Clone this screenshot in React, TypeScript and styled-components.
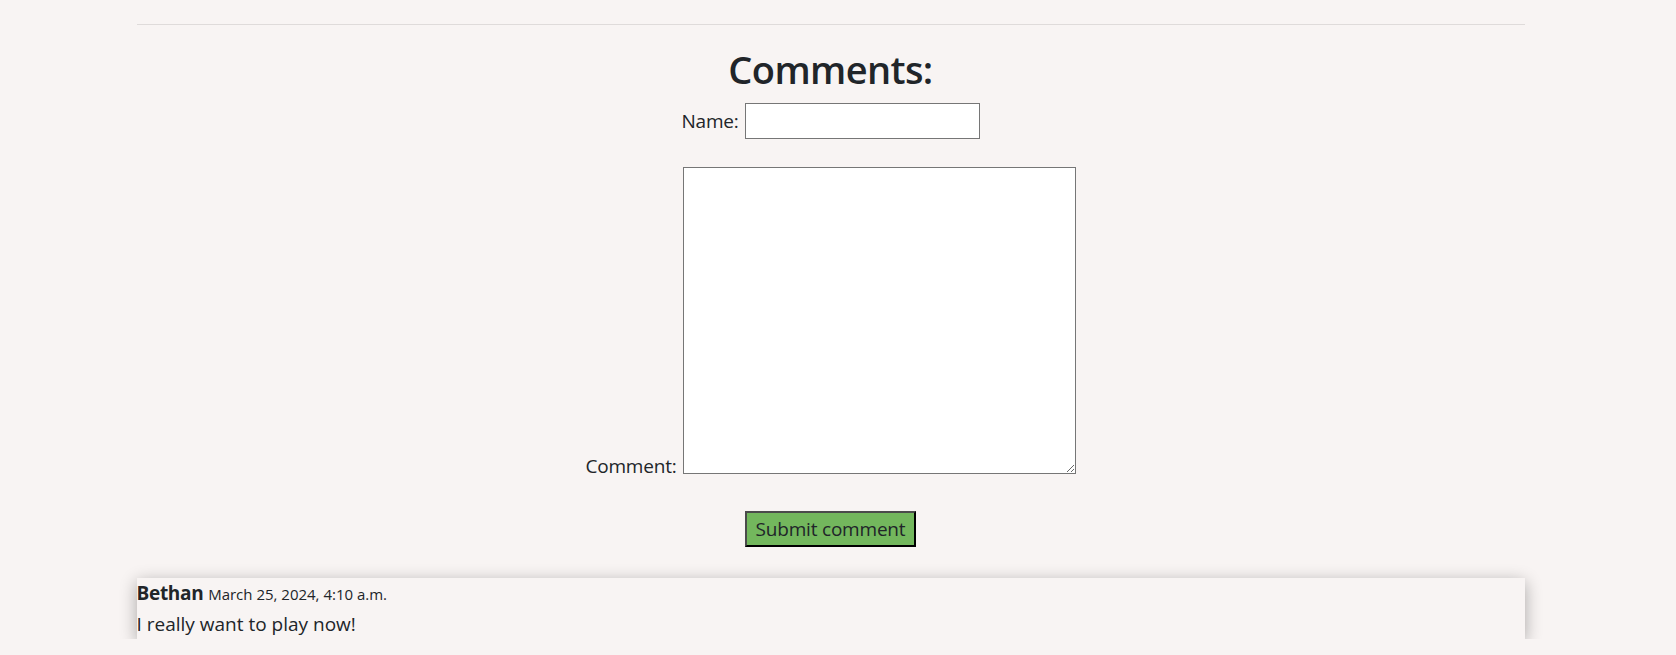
import React from "react";
import styled, { createGlobalStyle } from "styled-components";

const GlobalStyle = createGlobalStyle`
  html, body {
    margin: 0;
    padding: 0;
    background: #f8f4f3;
  }
  body {
    font-family: "Open Sans", "Noto Sans", sans-serif;
    font-size: 19px;
    letter-spacing: -0.2px;
    line-height: 1.5;
    color: #212529;
  }
  * { box-sizing: border-box; }
`;

const Page = styled.div`
  width: 1661px;
  padding-top: 24px;
`;

const Container = styled.main`
  width: 1388px;
  margin: 0 auto;
`;

const Rule = styled.hr`
  margin: 0;
  border: 0;
  border-top: 1px solid #dfdbda;
`;

const Section = styled.section`
  display: flex;
  flex-direction: column;
  align-items: center;
`;

const Title = styled.h1`
  margin: 20px 0 0;
  font-size: 38px;
  font-weight: 600;
  letter-spacing: -0.6px;
  line-height: 48px;
  text-align: center;
`;

const Form = styled.form`
  display: flex;
  flex-direction: column;
  align-items: center;
`;

const Row = styled.div<{ $end?: boolean; $top: number }>`
  display: flex;
  justify-content: center;
  align-items: ${(p) => (p.$end ? "flex-end" : "center")};
  gap: 6px;
  margin-top: ${(p) => p.$top}px;
`;

const Label = styled.label<{ $end?: boolean }>`
  line-height: 30px;
  margin-bottom: ${(p) => (p.$end ? "-7px" : "0")};
`;

const TextInput = styled.input`
  width: 235px;
  height: 36px;
  border: 1px solid #767676;
  background: #fff;
  font: inherit;
  padding: 1px 2px;
  margin: 0;
`;

const TextArea = styled.textarea`
  width: 393px;
  height: 307px;
  border: 1px solid #767676;
  background: #fff;
  margin: 0;
  padding: 2px;
`;

const SubmitButton = styled.button`
  margin-top: 37px;
  width: 171px;
  height: 36px;
  padding: 0;
  background: #73b75d;
  border-width: 2px;
  border-style: solid;
  border-color: #4b4b4b #000 #000 #4b4b4b;
  font-family: inherit;
  font-size: 19px;
  letter-spacing: -0.2px;
  line-height: 30px;
  color: #212529;
`;

const CommentCard = styled.article`
  margin-top: 31px;
  width: 100%;
  background: #f8f4f3;
  box-shadow: 0 4px 16px rgba(0, 0, 0, 0.32);
`;

const Meta = styled.div`
  line-height: 30px;
`;

const Author = styled.strong`
  font-weight: 700;
  font-size: 19px;
  letter-spacing: -0.3px;
`;

const Stamp = styled.span`
  font-size: 15px;
  letter-spacing: 0;
`;

const Body = styled.p`
  margin: 0;
  line-height: 30px;
  letter-spacing: 0;
`;

export default function App() {
  return (
    <>
      <GlobalStyle />
      <Page>
        <Container>
          <Rule />
          <Section>
            <Title>Comments:</Title>
            <Form onSubmit={(e) => e.preventDefault()}>
              <Row $top={10}>
                <Label htmlFor="name">Name:</Label>
                <TextInput id="name" type="text" />
              </Row>
              <Row $end $top={28}>
                <Label $end htmlFor="comment">
                  Comment:
                </Label>
                <TextArea id="comment" />
              </Row>
              <SubmitButton type="submit">Submit comment</SubmitButton>
            </Form>
            <CommentCard>
              <Meta>
                <Author>Bethan</Author> <Stamp>March 25, 2024, 4:10 a.m.</Stamp>
              </Meta>
              <Body>I really want to play now!</Body>
            </CommentCard>
          </Section>
        </Container>
      </Page>
    </>
  );
}
